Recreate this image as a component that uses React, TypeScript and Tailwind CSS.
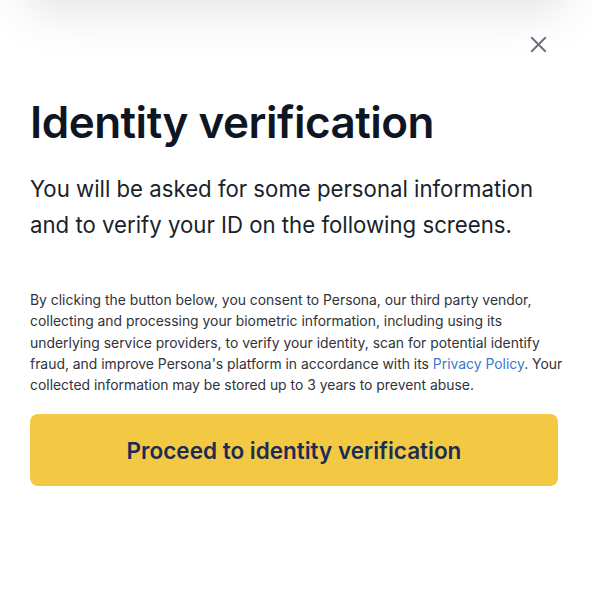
import { X } from "lucide-react";

export default function App() {
  return (
    <div
      className="relative w-[592px] h-[596px] overflow-hidden bg-white text-[#0f1623]"
      style={{ fontFamily: "Inter, 'Noto Sans', sans-serif" }}
    >
      {/* shadow of the panel above */}
      <div className="absolute left-[20px] right-[20px] -top-[60px] h-[60px] rounded-[40px] bg-white shadow-[0_10px_50px_rgba(0,0,0,0.12)]" />

      <div className="flex justify-end pt-[31px] pr-[40px]">
        <button className="text-[#6b6e7d]" title="Close">
          <X size={27} strokeWidth={1.6} />
        </button>
      </div>

      <div className="pl-[30px] pr-[34px]">
        <h1 className="mt-[38px] text-[44px] leading-[52px] font-semibold tracking-[-0.5px]">
          Identity verification
        </h1>
        <p className="mt-[23px] text-[22.2px] leading-[36px] text-[#1a1f2b]">
          You will be asked for some personal information and to verify your ID on the following screens.
        </p>
        <p className="mt-[47px] -mr-[8px] text-[13.9px] leading-[21.3px] text-[#30333a]">
          By clicking the button below, you consent to Persona, our third party vendor, collecting and processing your
          biometric information, including using its underlying service providers, to verify your identity, scan for
          potential identify fraud, and improve Persona's platform in accordance with its{" "}
          <a className="text-[#3b78d0]">Privacy Policy</a>. Your collected information may be stored up to 3 years to
          prevent abuse.
        </p>
        <button className="mt-[18px] w-full h-[72px] rounded-[8px] bg-[#f3c843] text-[#1b2d52] text-[22.5px] font-semibold">
          Proceed to identity verification
        </button>
      </div>
    </div>
  );
}
